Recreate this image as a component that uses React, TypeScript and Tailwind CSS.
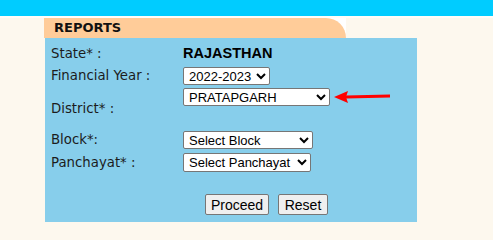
import React from "react";

const label = "text-[13.3px] text-[#1c1c1c] [font-family:'DejaVu_Sans',Verdana,sans-serif]";
const selectCls =
  "h-[18px] border border-[#767676] rounded-[2px] bg-white text-black text-[13px] [font-family:'Liberation_Sans',Arial,sans-serif] px-[1px]";
const btnCls =
  "h-[21px] border border-[#767676] rounded-[2px] bg-[#efefef] text-black text-[14px] [font-family:'Liberation_Sans',Arial,sans-serif]";

function RedArrow() {
  return (
    <svg width="58" height="14" viewBox="0 0 58 14" className="ml-[4px] mt-[-1px]">
      <line x1="12" y1="7" x2="56" y2="6" stroke="#ff0000" strokeWidth="3" />
      <polygon points="0,7 14,1 12,7 14,13" fill="#ff0000" />
    </svg>
  );
}

function App() {
  return (
    <div className="w-[493px] h-[240px] bg-[#fdf8ee] overflow-hidden">
      <div className="h-[16px] bg-[#00ccff]" />
      <div className="h-[2px] bg-[#fffdf8]" />
      <div className="ml-[44px] w-[302px] h-[20px] bg-white">
        <div className="h-full bg-[#ffcc99] rounded-tr-[22px] pl-[10px] flex items-center">
          <span className="text-[13px] font-bold text-[#111] [font-family:'DejaVu_Sans',Verdana,sans-serif]">
            REPORTS
          </span>
        </div>
      </div>
      <div className="ml-[45px] w-[372px] bg-[#87ceeb] pl-[6px] pt-[5px] pb-[7px]">
        <div className="flex items-center h-[22px]">
          <span className={`${label} w-[132px]`}>State* :</span>
          <span className="text-[14.5px] font-bold text-black [font-family:'Liberation_Sans',Arial,sans-serif]">
            RAJASTHAN
          </span>
        </div>
        <div className="flex items-center h-[22px]">
          <span className={`${label} w-[132px]`}>Financial Year :</span>
          <select className={`${selectCls} w-[87px]`} defaultValue="2022-2023">
            <option>2022-2023</option>
          </select>
        </div>
        <div className="flex items-start h-[41px]">
          <span className={`${label} w-[132px] mt-[12px]`}>District* :</span>
          <div className="flex items-center mt-[1px]">
            <select className={`${selectCls} w-[147px]`} defaultValue="PRATAPGARH">
              <option>PRATAPGARH</option>
            </select>
            <RedArrow />
          </div>
        </div>
        <div className="flex items-center h-[23px]">
          <span className={`${label} w-[132px]`}>Block*:</span>
          <select className={`${selectCls} w-[130px]`} defaultValue="Select Block">
            <option>Select Block</option>
          </select>
        </div>
        <div className="flex items-center h-[23px]">
          <span className={`${label} w-[132px]`}>Panchayat* :</span>
          <select className={`${selectCls} w-[128px] h-[19px]`} defaultValue="Select Panchayat">
            <option>Select Panchayat</option>
          </select>
        </div>
        <div className="flex gap-[9px] pl-[154px] mt-[20px]">
          <button className={`${btnCls} w-[64px]`}>Proceed</button>
          <button className={`${btnCls} w-[50px]`}>Reset</button>
        </div>
      </div>
    </div>
  );
}

export default App;
